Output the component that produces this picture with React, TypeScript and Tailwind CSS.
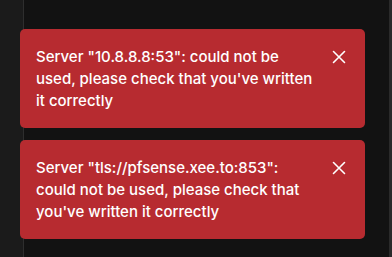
import React from "react";

function CloseIcon() {
  return (
    <svg width="20" height="20" viewBox="0 0 20 20" fill="none" stroke="white" strokeWidth="1.6" strokeLinecap="round">
      <path d="M4.5 4.5 L15.5 15.5 M15.5 4.5 L4.5 15.5" />
    </svg>
  );
}

function Toast({ text }: { text: string }) {
  return (
    <div className="flex items-start gap-3 rounded-[5px] bg-[#b72b30] pl-4 pr-4 pt-[17px] pb-[16px] text-white">
      <p className="flex-1 text-[15px] leading-[22px] font-medium">{text}</p>
      <button className="flex h-[22px] w-5 items-center justify-center">
        <CloseIcon />
      </button>
    </div>
  );
}

export default function App() {
  return (
    <div
      className="relative flex h-[257px] w-[392px] overflow-hidden bg-[#121212]"
      style={{ fontFamily: "Inter, 'Noto Sans', sans-serif" }}
    >
      <div className="h-full w-[24px] border-r border-[#2e2e2e] bg-[#1b1b1b]" />
      <div className="h-full flex-1" />
      <div className="h-full w-[3px] bg-[#2a2a2a]" />
      <div className="absolute left-[20px] top-[29px] flex w-[345px] flex-col gap-3">
        <Toast text={'Server "10.8.8.8:53": could not be used, please check that you\'ve written it correctly'} />
        <Toast text={'Server "tls://pfsense.xee.to:853": could not be used, please check that you\'ve written it correctly'} />
      </div>
    </div>
  );
}
